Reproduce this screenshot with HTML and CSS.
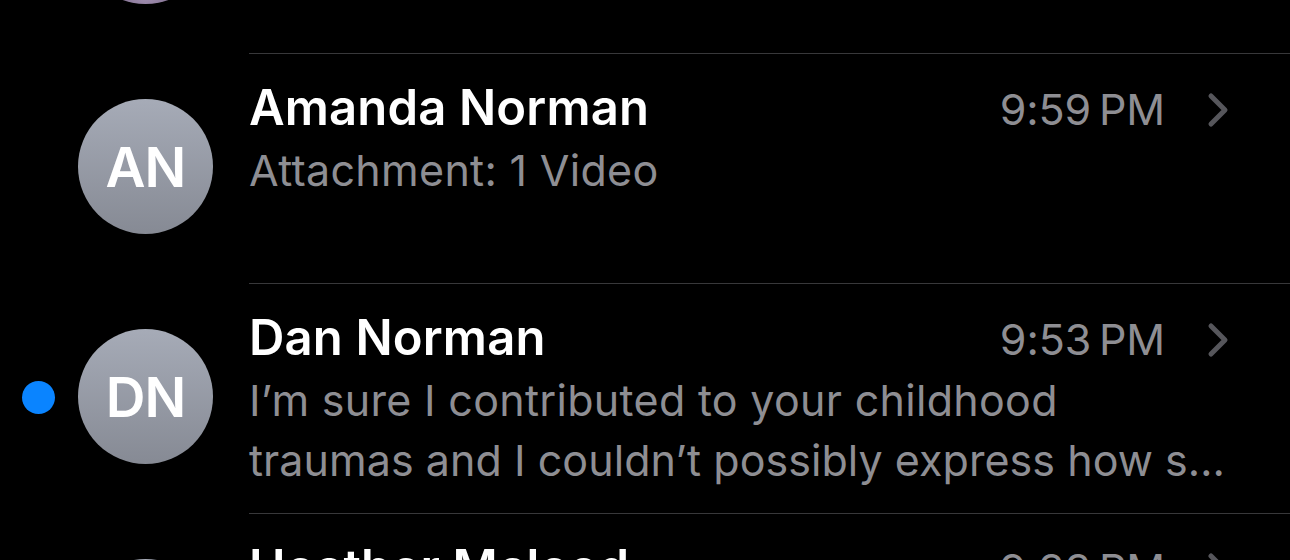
FILE: index.html
```html
<!DOCTYPE html>
<html>
<head>
<meta charset="utf-8">
<link rel="stylesheet" href="styles.css">
</head>
<body>
<div class="list">
  <div class="row">
    <div class="lead">
      <span class="dot hidden"></span>
      <div class="avatar photo"></div>
    </div>
    <div class="content first"></div>
  </div>

  <div class="row">
    <div class="lead">
      <span class="dot hidden"></span>
      <div class="avatar">AN</div>
    </div>
    <div class="content">
      <div class="head">
        <span class="name">Amanda Norman</span>
        <span class="time">9:59&#8201;PM</span>
        <svg class="chev" viewBox="0 0 24 38" width="24" height="38"><path d="M5 5 L19 19 L5 33" fill="none" stroke="#56565b" stroke-width="5" stroke-linecap="round" stroke-linejoin="round"/></svg>
      </div>
      <div class="preview">Attachment: 1 Video</div>
    </div>
  </div>

  <div class="row">
    <div class="lead">
      <span class="dot"></span>
      <div class="avatar">DN</div>
    </div>
    <div class="content">
      <div class="head">
        <span class="name">Dan Norman</span>
        <span class="time">9:53&#8201;PM</span>
        <svg class="chev" viewBox="0 0 24 38" width="24" height="38"><path d="M5 5 L19 19 L5 33" fill="none" stroke="#56565b" stroke-width="5" stroke-linecap="round" stroke-linejoin="round"/></svg>
      </div>
      <div class="preview">I’m sure I contributed to your childhood</div>
      <div class="preview second">traumas and I couldn’t possibly express how s…</div>
    </div>
  </div>

  <div class="row">
    <div class="lead">
      <span class="dot hidden"></span>
      <div class="avatar">HM</div>
    </div>
    <div class="content">
      <div class="head">
        <span class="name">Heather Mcleod</span>
        <span class="time">9:33&#8201;PM</span>
        <svg class="chev" viewBox="0 0 24 38" width="24" height="38"><path d="M5 5 L19 19 L5 33" fill="none" stroke="#56565b" stroke-width="5" stroke-linecap="round" stroke-linejoin="round"/></svg>
      </div>
      <div class="preview">See you soon</div>
    </div>
  </div>
</div>
</body>
</html>
```
FILE: styles.css
```css
html, body {
  margin: 0;
  padding: 0;
  background: #000;
  overflow: hidden;
}
body {
  width: 1290px;
  height: 560px;
  font-family: Inter, "Noto Sans", sans-serif;
  -webkit-font-smoothing: antialiased;
}
.list {
  margin-top: -177px;
}
.row {
  display: flex;
  height: 230px;
}
.lead {
  width: 249px;
  flex: none;
  display: flex;
  align-items: flex-start;
  padding-left: 22px;
  box-sizing: border-box;
}
.dot {
  width: 33px;
  height: 33px;
  border-radius: 50%;
  background: #0a84ff;
  margin-top: 98px;
  margin-right: 23px;
  flex: none;
}
.dot.hidden {
  visibility: hidden;
}
.avatar {
  width: 135px;
  height: 135px;
  margin-top: 46px;
  border-radius: 50%;
  background: linear-gradient(180deg, #a6abb7 0%, #868a94 100%);
  color: #fff;
  font-weight: 600;
  font-size: 55px;
  letter-spacing: -1px;
  display: flex;
  align-items: center;
  justify-content: center;
  flex: none;
}
.avatar.photo {
  background: radial-gradient(circle at 50% 90%, #a996b8 0%, #5e4f6c 40%, #241e29 75%);
}
.content {
  flex: 1;
  border-top: 1px solid #38383a;
  padding-top: 24px;
  padding-right: 60px;
  min-width: 0;
}
.content.first {
  border-top: none;
}
.head {
  display: flex;
  align-items: baseline;
  height: 60px;
}
.name {
  flex: 1;
  color: #fff;
  font-weight: 600;
  font-size: 49px;
  line-height: 60px;
  letter-spacing: 0.15px;
  white-space: nowrap;
}
.time {
  color: #8e8e93;
  font-size: 43px;
  line-height: 60px;
  letter-spacing: -0.1px;
}
.chev {
  align-self: center;
  margin-left: 41px;
  margin-top: 4px;
  flex: none;
}
.preview {
  color: #8e8e93;
  font-size: 43px;
  line-height: 60px;
  letter-spacing: 0.3px;
  margin-top: 2px;
  white-space: nowrap;
}
.preview.second {
  margin-top: 0;
  letter-spacing: 0.05px;
}
```
